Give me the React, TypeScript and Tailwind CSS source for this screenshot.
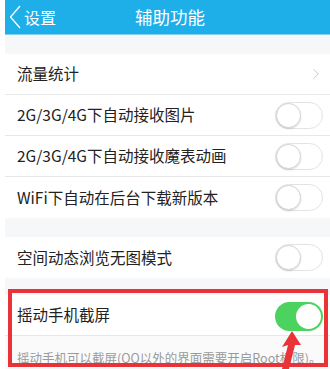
import { ChevronRight } from "lucide-react";

const font = "font-['Noto_Sans_CJK_SC','Liberation_Sans',sans-serif]";

function Toggle({ on = false }: { on?: boolean }) {
  if (on) {
    return (
      <div className="w-[48px] h-[29px] rounded-full bg-[#4cd35f] relative mt-[2px]">
        <div className="absolute right-[2px] top-[2px] w-[25px] h-[25px] rounded-full bg-white" />
      </div>
    );
  }
  return (
    <div className="w-[48px] h-[27px] rounded-full border border-[#e3e3e3] bg-white relative">
      <div className="absolute left-0 top-0 w-[25px] h-[25px] rounded-full bg-white border border-[#d4d4d4] shadow-[0_1px_2px_rgba(0,0,0,0.15)]" />
    </div>
  );
}

function Row({
  label,
  right,
  last = false,
}: {
  label: string;
  right: React.ReactNode;
  last?: boolean;
}) {
  return (
    <div
      className={`h-[41px] flex items-center justify-between pl-[12px] pr-[7px] bg-white ${
        last ? "" : "border-b border-[#e8e8e8]"
      }`}
    >
      <span className="text-[15.5px] text-[#222]">{label}</span>
      {right}
    </div>
  );
}

export default function App() {
  return (
    <div className={`w-[330px] h-[369px] bg-white pl-[5px] relative overflow-hidden ${font}`}>
      {/* header */}
      <div className="h-[35px] bg-[#1eaee8] border-b border-[#7fd0f2] flex items-center relative">
        <div className="flex items-center pl-[4px] text-white">
          <svg width="13" height="24" viewBox="0 0 13 24" className="mr-[2px]">
            <path d="M11 1 L1.5 12 L11 23" stroke="white" strokeWidth="1.3" fill="none" />
          </svg>
          <span className="text-[16px]">设置</span>
        </div>
        <span className="absolute left-[130px] text-[17.5px] text-white">辅助功能</span>
      </div>

      <div className="h-[19px] bg-[#f5f7f9]" />

      <Row
        label="流量统计"
        right={<ChevronRight size={18} strokeWidth={1.2} className="text-[#c2c2c2] mr-[-2px]" />}
      />
      <Row label="2G/3G/4G下自动接收图片" right={<Toggle />} />
      <Row label="2G/3G/4G下自动接收魔表动画" right={<Toggle />} />
      <Row label="WiFi下自动在后台下载新版本" right={<Toggle />} last />

      <div className="h-[19px] bg-[#f5f7f9]" />

      <Row label="空间动态浏览无图模式" right={<Toggle />} last />

      <div className="h-[17px] bg-[#f5f7f9]" />

      <Row label="摇动手机截屏" right={<Toggle on />} />
      <div className="h-[36px] bg-[#fafafa] pl-[12px] pt-[8px]">
        <span className="text-[12.5px] text-[#9a9a9a] whitespace-nowrap">
          摇动手机可以截屏(QQ以外的界面需要开启Root权限)。
        </span>
      </div>

      {/* annotation box */}
      <div className="absolute left-[8px] top-[289px] w-[320px] h-[78px] border-[4px] border-[#ea3339]" />
      {/* annotation arrow */}
      <svg className="absolute left-[276px] top-[328px]" width="30" height="41" viewBox="0 0 30 41">
        <path d="M16 3 L25 17 L19 17 L13 41 L6 41 L12 17 L6 19 Z" fill="#ea3339" />
      </svg>
    </div>
  );
}
